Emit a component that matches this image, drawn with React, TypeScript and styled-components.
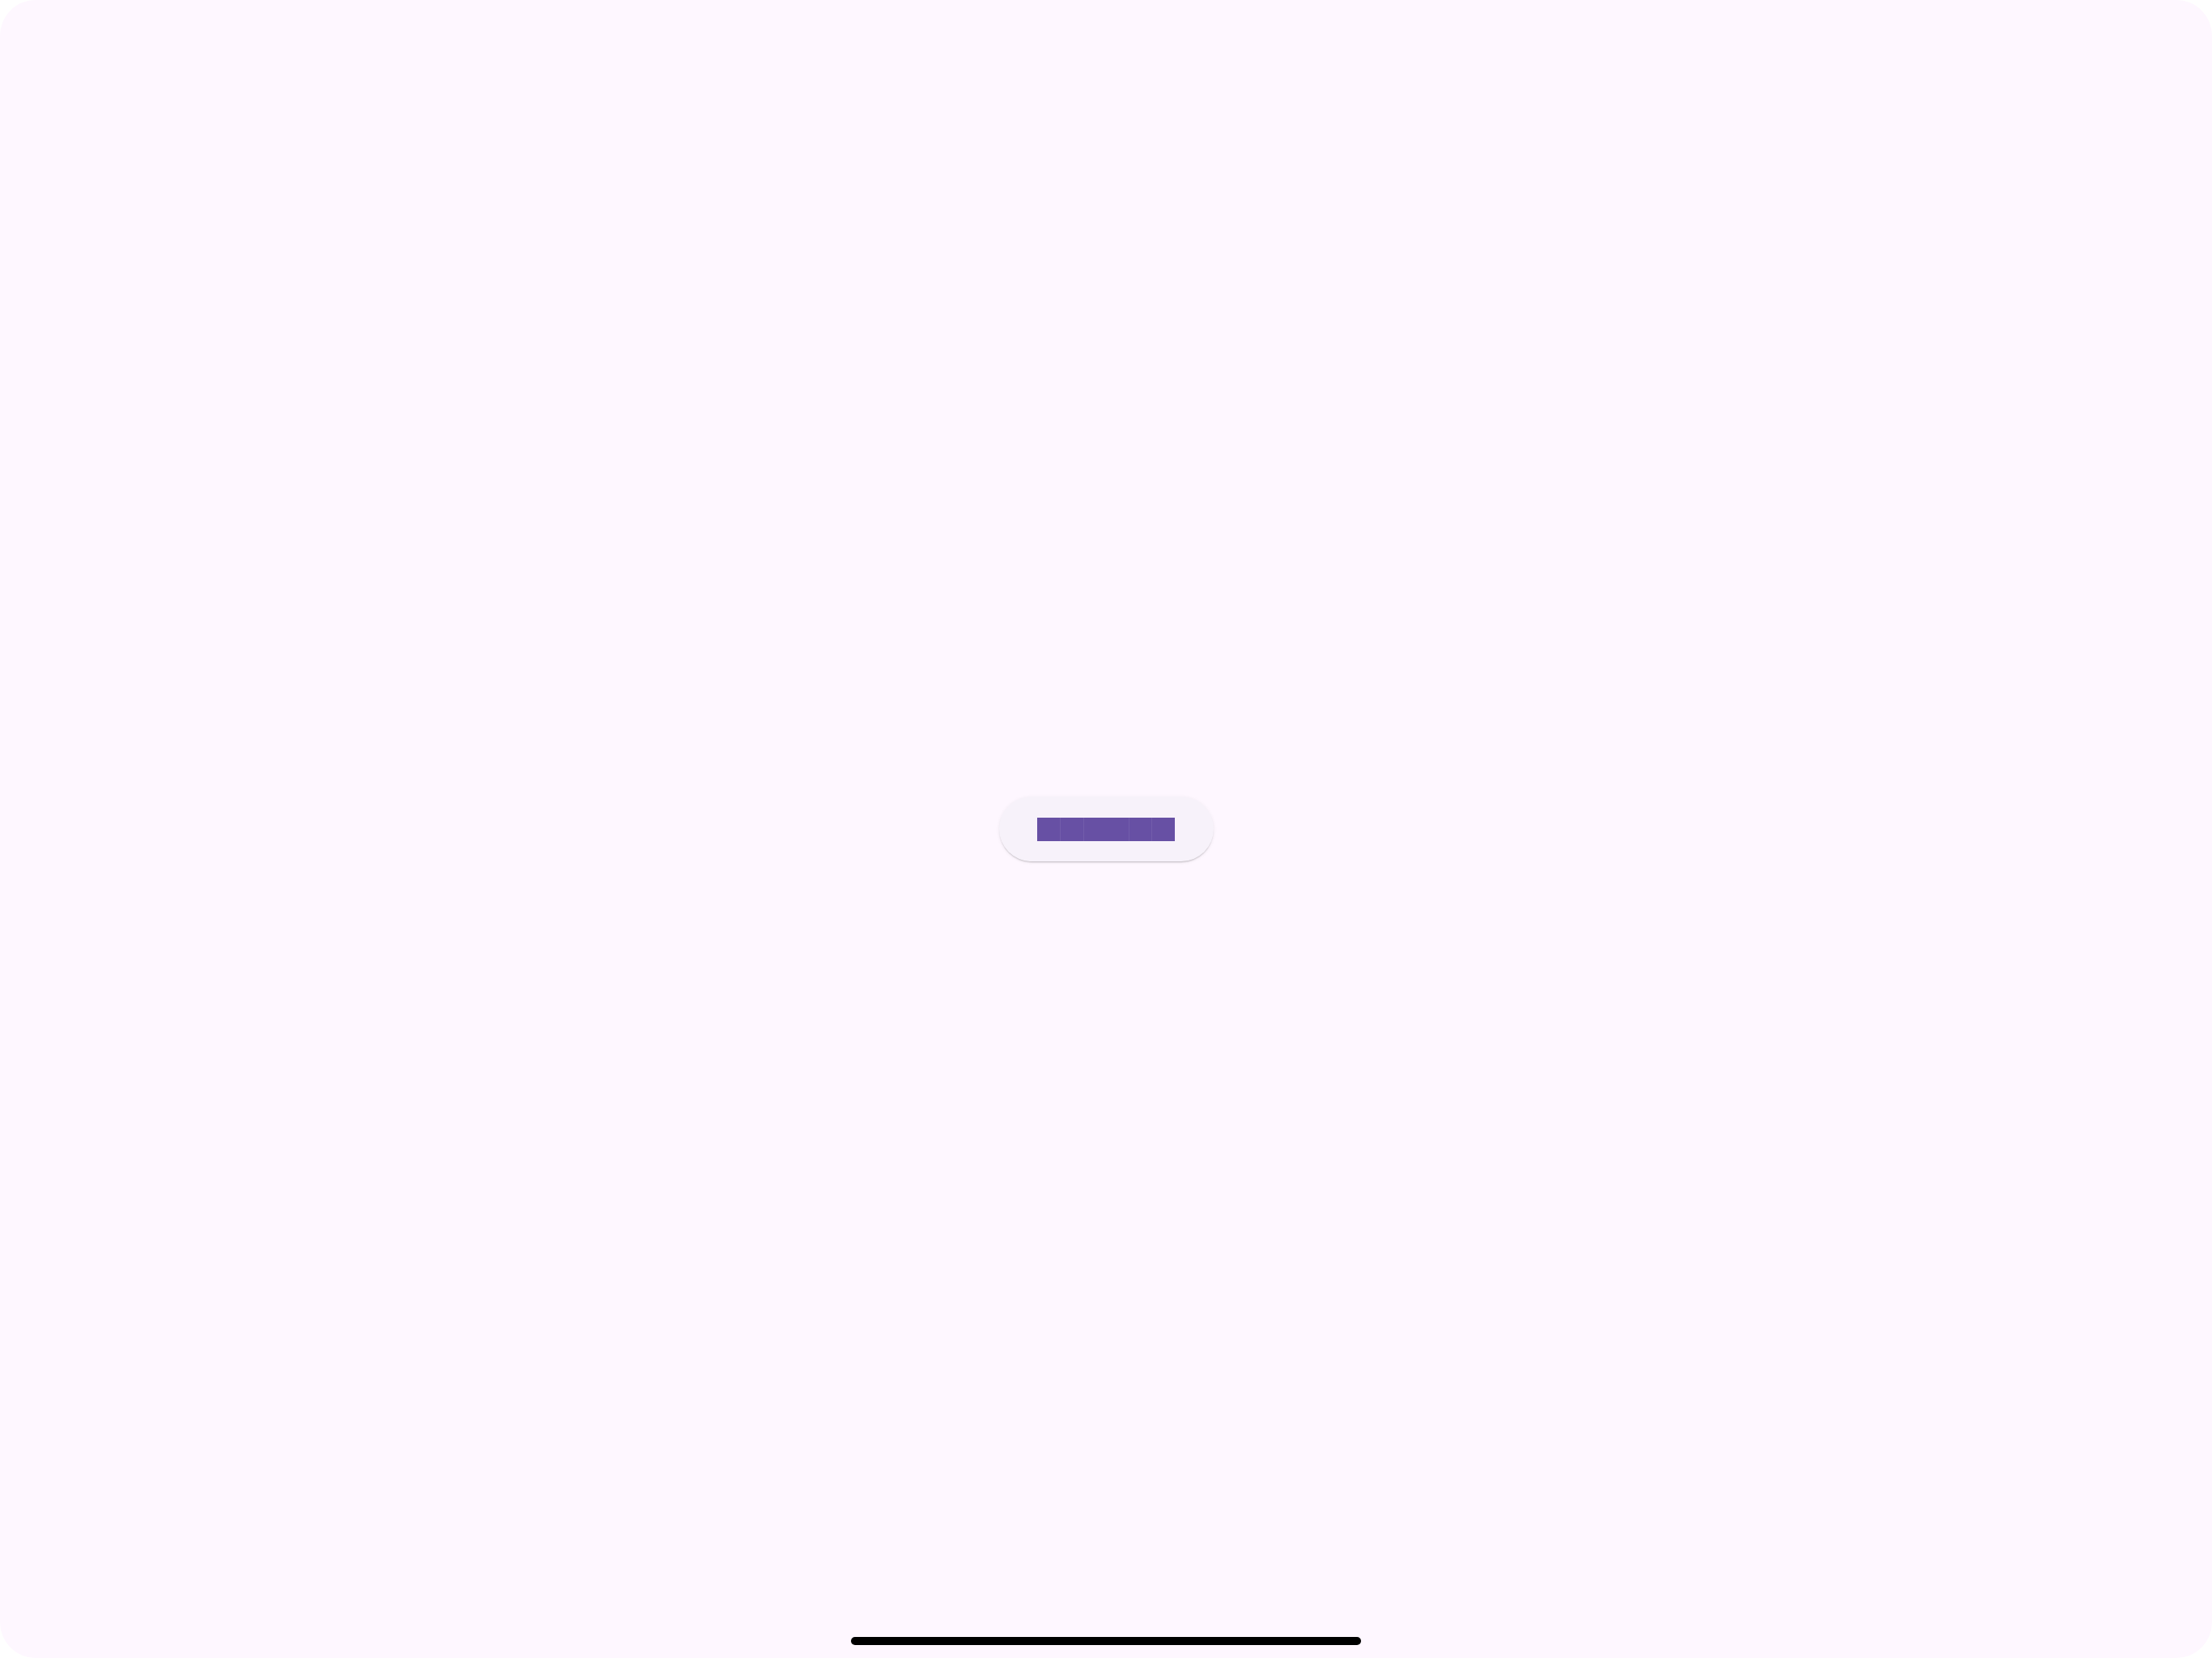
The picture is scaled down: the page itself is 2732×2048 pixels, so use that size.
import React from "react";
import styled, { createGlobalStyle } from "styled-components";

const Global = createGlobalStyle`
  html, body { margin: 0; padding: 0; background: #ffffff; }
  body { font-family: "Roboto", "Liberation Sans", sans-serif; }
`;

const Screen = styled.div`
  position: relative;
  width: 2732px;
  height: 2048px;
  background: #fef7ff;
  border-radius: 44px;
  overflow: hidden;
  display: flex;
  align-items: center;
  justify-content: center;
`;

const ElevatedButton = styled.button`
  width: 265px;
  height: 80px;
  border: none;
  border-radius: 40px;
  background: #f7f2fa;
  box-shadow: 0 2px 2px -1px rgba(0, 0, 0, 0.22), 0 1px 5px rgba(0, 0, 0, 0.06);
  display: flex;
  align-items: center;
  justify-content: center;
  padding: 0;
  cursor: pointer;
`;

const Label = styled.span`
  display: flex;
  height: 29px;
`;

const Glyph = styled.span<{ $w: number }>`
  width: ${(p) => p.$w}px;
  height: 29px;
  background: #6750a4;
  box-shadow: inset 1px 0 0 rgba(255, 255, 255, 0.08);
  &:first-child { box-shadow: none; }
`;

const HomeIndicator = styled.div`
  position: absolute;
  left: 50%;
  bottom: 16px;
  width: 630px;
  height: 10px;
  margin-left: -315px;
  border-radius: 5px;
  background: #000000;
`;

const widths = [28, 29, 56, 28, 29];

export default function App() {
  return (
    <>
      <Global />
      <Screen>
        <ElevatedButton aria-label="Button">
          <Label>
            {widths.map((w, i) => (
              <Glyph key={i} $w={w} />
            ))}
          </Label>
        </ElevatedButton>
        <HomeIndicator />
      </Screen>
    </>
  );
}
